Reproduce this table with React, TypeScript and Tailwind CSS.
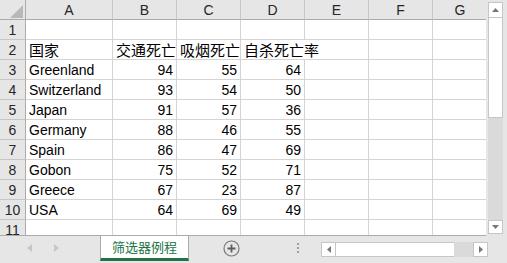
import React from "react";

type Cell = string | number | null;

const columns = ["A", "B", "C", "D", "E", "F", "G"];

const rows: Cell[][] = [
  [null, null, null, null],
  ["国家", "交通死亡", "吸烟死亡", "自杀死亡率"],
  ["Greenland", 94, 55, 64],
  ["Switzerland", 93, 54, 50],
  ["Japan", 91, 57, 36],
  ["Germany", 88, 46, 55],
  ["Spain", 86, 47, 69],
  ["Gobon", 75, 52, 71],
  ["Greece", 67, 23, 87],
  ["USA", 64, 69, 49],
  [null, null, null, null],
];

const latin = { fontFamily: '"Liberation Sans", Arial, sans-serif' };
const cjk = { fontFamily: '"Noto Sans CJK SC", "Liberation Sans", sans-serif' };

const Sheet: React.FC = () => {
  return (
    <div className="h-[236px] overflow-hidden border-b border-[#ababab]">
      <div className="grid grid-cols-[26px_87px_64px_64px_64px_64px_64px_54px] bg-white">
        {/* corner */}
        <div className="relative h-[20px] border-r border-b border-[#ababab] bg-[#e6e6e6]">
          <svg className="absolute left-[10px] top-[5px]" width="13" height="13" viewBox="0 0 13 13">
            <polygon points="13,0 13,13 0,13" fill="#b8b8b8" />
          </svg>
        </div>
        {columns.map((c, i) => (
          <div
            key={c}
            className={`flex h-[20px] items-center justify-center border-b border-[#ababab] bg-[#e6e6e6] text-[14px] leading-[18px] text-[#262626] ${
              i === columns.length - 1 ? "" : "border-r border-r-[#c6c6c6]"
            }`}
            style={latin}
          >
            {c}
          </div>
        ))}

        {rows.map((row, r) => (
          <React.Fragment key={r}>
            <div
              className="flex h-[20px] items-center justify-center border-r border-b border-r-[#ababab] border-b-[#c6c6c6] bg-[#e6e6e6] text-[14px] leading-[18px] text-[#262626]"
              style={latin}
            >
              {r + 1}
            </div>
            {columns.map((c, ci) => {
              const v = ci < row.length ? row[ci] : null;
              const isText = typeof v === "string";
              // D2 spills into the empty E2, like a spreadsheet does
              const overflows = r === 1 && ci === 3;
              const last = ci === columns.length - 1;
              return (
                <div
                  key={c}
                  className={`flex h-[20px] items-center whitespace-nowrap border-b border-[#d4d4d4] px-[3px] leading-[18px] text-black ${
                    overflows ? "overflow-visible" : "overflow-x-hidden border-r"
                  } ${last ? "border-r-[#ababab]" : "border-r-[#d4d4d4]"} ${
                    isText ? "justify-start" : "justify-end"
                  } ${r === 1 ? "text-[15px]" : "text-[14px]"}`}
                  style={r === 1 ? cjk : latin}
                >
                  {v}
                </div>
              );
            })}
          </React.Fragment>
        ))}
      </div>
    </div>
  );
};

const VScroll: React.FC = () => (
  <div className="flex h-[236px] w-[21px] flex-col bg-[#e6e6e6] pl-[2px] pr-[4px] pt-[2px] pb-[2px]">
    <div className="flex h-[16px] items-center justify-center border border-[#c6c6c6] bg-white">
      <svg width="7" height="4" viewBox="0 0 7 4">
        <polygon points="3.5,0 7,4 0,4" fill="#777" />
      </svg>
    </div>
    <div className="h-[100px] border-x border-b border-[#c6c6c6] bg-white" />
    <div className="flex-1 bg-[#dadada]" />
    <div className="flex h-[14px] items-center justify-center border border-[#c6c6c6] bg-white">
      <svg width="7" height="4" viewBox="0 0 7 4">
        <polygon points="0,0 7,0 3.5,4" fill="#777" />
      </svg>
    </div>
  </div>
);

const TabBar: React.FC = () => (
  <div className="flex h-[27px] items-start bg-[#e6e6e6]">
    <div className="flex h-[24px] w-[100px] items-center gap-[22px] pl-[27px]">
      <svg width="5" height="8" viewBox="0 0 5 8">
        <polygon points="5,0 5,8 0,4" fill="#c6c6c6" />
      </svg>
      <svg width="5" height="8" viewBox="0 0 5 8">
        <polygon points="0,0 5,4 0,8" fill="#c6c6c6" />
      </svg>
    </div>
    <div
      className="flex h-[25px] w-[89px] items-center justify-center border-x border-b-[3px] border-x-[#ababab] border-b-[#217346] bg-white text-[13px] text-[#217346]"
      style={cjk}
    >
      筛选器例程
    </div>
    <div className="flex h-[24px] w-[84px] items-center justify-center">
      <svg width="17" height="17" viewBox="0 0 17 17">
        <circle cx="8.5" cy="8.5" r="7.5" fill="none" stroke="#7a7a7a" strokeWidth="1.2" />
        <path d="M8.5 4.5v8M4.5 8.5h8" stroke="#5e5e5e" strokeWidth="1.8" />
      </svg>
    </div>
    <div className="flex h-[24px] w-[48px] flex-col items-center justify-center gap-[2px] pl-[2px]">
      <div className="h-[2px] w-[2px] bg-[#a0a0a0]" />
      <div className="h-[2px] w-[2px] bg-[#a0a0a0]" />
      <div className="h-[2px] w-[2px] bg-[#a0a0a0]" />
    </div>
    <div className="mt-[6px] flex h-[15px]">
      <div className="flex w-[15px] items-center justify-center border border-[#c6c6c6] bg-white">
        <svg width="4" height="7" viewBox="0 0 4 7">
          <polygon points="4,0 4,7 0,3.5" fill="#777" />
        </svg>
      </div>
      <div className="w-[118px] border-y border-[#c6c6c6] bg-white" />
      <div className="w-[19px] bg-[#dadada]" />
      <div className="flex w-[15px] items-center justify-center border border-[#c6c6c6] bg-white">
        <svg width="4" height="7" viewBox="0 0 4 7">
          <polygon points="0,0 4,3.5 0,7" fill="#777" />
        </svg>
      </div>
    </div>
  </div>
);

export default function App() {
  return (
    <div className="h-[263px] w-[507px] overflow-hidden bg-[#e6e6e6]">
      <div className="flex">
        <div className="w-[486px]">
          <Sheet />
        </div>
        <VScroll />
      </div>
      <TabBar />
    </div>
  );
}
